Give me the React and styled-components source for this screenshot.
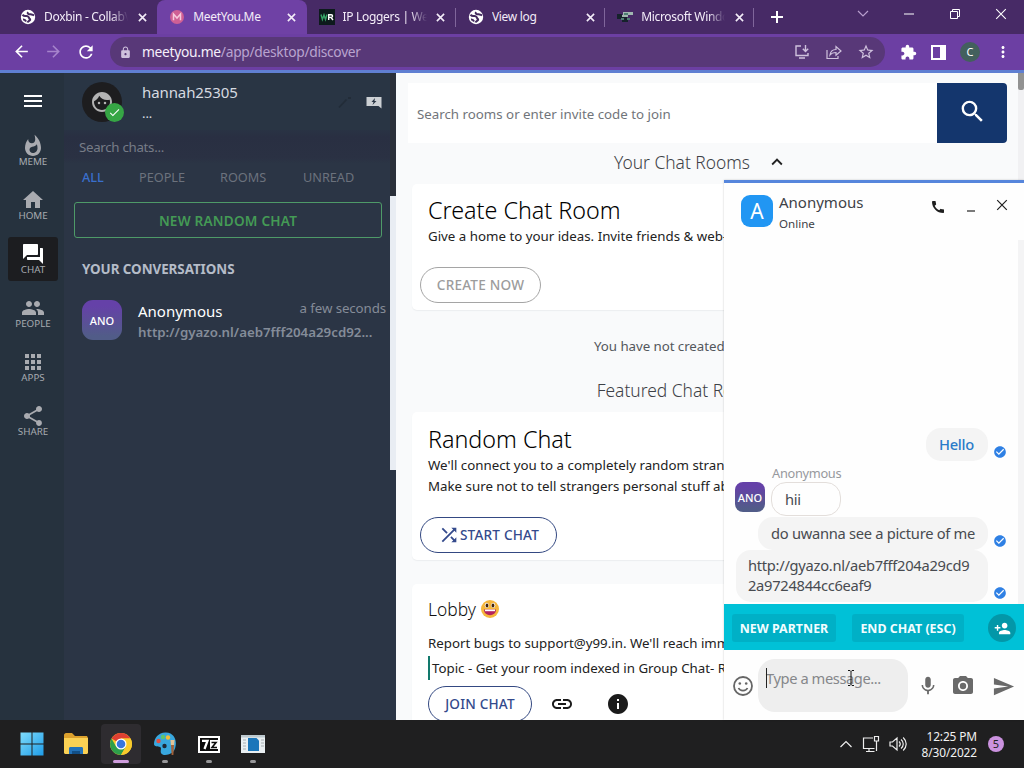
import React from "react";
import styled, { createGlobalStyle, css } from "styled-components";
import {
  MdApps,
  MdArrowBack,
  MdArrowForward,
  MdCall,
  MdCheck,
  MdCheckCircle,
  MdExtension,
  MdFace,
  MdForum,
  MdHome,
  MdInfo,
  MdKeyboardArrowUp,
  MdLink,
  MdLock,
  MdMic,
  MdMoreVert,
  MdPeople,
  MdPersonAdd,
  MdPhotoCamera,
  MdRefresh,
  MdSearch,
  MdSend,
  MdShare,
  MdShuffle,
  MdStarBorder,
  MdWhatshot,
} from "react-icons/md";

const GlobalStyle = createGlobalStyle`
  * {
    box-sizing: border-box;
  }

  body {
    margin: 0;
    overflow: hidden;
    font-family: "Noto Sans", "Open Sans", sans-serif;
  }

  svg {
    display: block;
    flex-shrink: 0;
  }
`;

const Screen = styled.div`
  width: 1024px;
  height: 768px;
  display: flex;
  flex-direction: column;
  overflow: hidden;
`;

/* ---------- browser ---------- */

const TabStrip = styled.header`
  display: flex;
  height: 34px;
  padding-left: 8px;
  background: #472a66;
`;

const BrowserTab = styled.div`
  position: relative;
  width: 149.3px;
  height: 34px;
  padding: 0 9px 0 12px;
  display: flex;
  align-items: center;
  color: #f3ecf8;
  ${(p) =>
    p.$active &&
    css`
      background: #6f41a5;
      border-radius: 8px 8px 0 0;
    `}
  ${(p) =>
    p.$divider &&
    css`
      &::after {
        content: "";
        position: absolute;
        right: 0;
        top: 8px;
        width: 1px;
        height: 19px;
        background: #80669b;
      }
    `}
`;

const TabTitle = styled.span`
  flex: 1;
  margin-left: 8px;
  font-size: 12px;
  line-height: 18px;
  letter-spacing: -0.32px;
  white-space: nowrap;
  overflow: hidden;
  mask-image: ${(p) => (p.$fade ? "linear-gradient(90deg, #000 80%, transparent)" : "none")};
`;

const TabClose = styled.span`
  width: 12px;
  margin-left: 8px;
  display: flex;
  justify-content: center;
`;

const PlusBox = styled.div`
  width: 45px;
  display: flex;
  align-items: center;
  justify-content: center;
`;

const WindowControls = styled.div`
  margin-left: auto;
  display: flex;
`;

const WindowButton = styled.div`
  width: 46px;
  height: 28px;
  display: flex;
  align-items: center;
  justify-content: center;
`;

const Toolbar = styled.div`
  height: 36px;
  padding: 0 12px;
  display: flex;
  align-items: center;
  background: #6c3fa3;
  color: #fff;
`;

const NavIcons = styled.div`
  display: flex;
  gap: 13px;
  margin-right: 14px;
`;

const AddressBar = styled.div`
  width: 775px;
  height: 30px;
  padding: 0 10px 0 9px;
  border-radius: 15px;
  background: #583878;
  display: flex;
  align-items: center;
  color: #cfc1dd;
`;

const Url = styled.span`
  flex: 1;
  margin-left: 10px;
  margin-top: -1px;
  color: #b9a4cf;
  font-size: 13.8px;
  letter-spacing: -0.29px;

  b {
    font-weight: 400;
    color: #f5effa;
  }
`;

const AddressIcons = styled.div`
  display: flex;
  align-items: center;
  gap: 14px;
`;

const ToolbarIcons = styled.div`
  margin-left: auto;
  display: flex;
  align-items: center;
  gap: 14px;
`;

const ProfileDot = styled.span`
  width: 20px;
  height: 20px;
  border-radius: 50%;
  background: #43605d;
  font-size: 11px;
  line-height: 20px;
  text-align: center;
`;

const LoadingLine = styled.div`
  height: 3px;
  flex-shrink: 0;
  background: #5f7fd2;
`;

/* ---------- app shell ---------- */

const Page = styled.div`
  position: relative;
  height: 647px;
  display: flex;
`;

const SideNav = styled.nav`
  width: 64px;
  padding: 20px 6px 0 8px;
  background: #26323e;
`;

const Burger = styled.div`
  width: 18px;
  height: 16px;
  margin: 0 0 20px 16px;
  padding: 2px 0;
  display: flex;
  flex-direction: column;
  justify-content: space-between;

  span {
    height: 2px;
    background: #fff;
  }
`;

const NavItem = styled.div`
  width: 50px;
  height: 44px;
  margin-bottom: 10px;
  padding-top: 5px;
  display: flex;
  flex-direction: column;
  align-items: center;
  border-radius: 3px;
  font-size: 9.8px;
  line-height: 10px;
  color: #a7abb0;
  background: ${(p) => (p.$active ? "#1c1d20" : "transparent")};

  svg {
    margin-bottom: -1px;
    color: ${(p) => (p.$active ? "#fff" : "#a9abb0")};
  }
`;

const ChatPanel = styled.section`
  width: 332px;
  background: #2b3545;
  display: flex;
  flex-direction: column;
`;

const ProfileRow = styled.div`
  height: 57px;
  padding: 9px 14px 0 18px;
  display: flex;
  background: #293544;
  border-right: 6px solid #2b303a;
`;

const ProfileAvatar = styled.div`
  position: relative;
  width: 40px;
  height: 40px;
  border-radius: 50%;
  background: #1d1d1f;
  display: flex;
  align-items: center;
  justify-content: center;
  color: #b3b3b3;
`;

const OnlineBadge = styled.span`
  position: absolute;
  left: 23px;
  top: 21px;
  width: 19px;
  height: 19px;
  border-radius: 50%;
  background: #36a645;
  color: #fff;
  display: flex;
  align-items: center;
  justify-content: center;
`;

const ProfileText = styled.div`
  flex: 1;
  margin: -1px 0 0 20px;
  color: #d6dae0;
  font-size: 15px;
  line-height: 22px;
  letter-spacing: -0.1px;
`;

const ProfileStatus = styled.div`
  font-size: 13px;
  line-height: 20px;
`;

const ProfileActions = styled.div`
  display: flex;
  gap: 13px;
  padding-top: 13px;
  margin-right: -6px;
`;

const ChatSearch = styled.div`
  height: 34px;
  padding-left: 15px;
  background: linear-gradient(180deg, #293344, #292f42 20%, #2a3143 80%, #2b3545);
  border-right: 6px solid #2b303a;
  color: #777c87;
  font-size: 13.3px;
  line-height: 34px;
  letter-spacing: -0.3px;
`;

const ChatFilters = styled.div`
  height: 32px;
  padding-left: 18px;
  display: grid;
  grid-template-columns: 57px 81px 83px auto;
  border-right: 6px solid #2b303a;
  color: #6c727d;
  font-size: 12.7px;
  line-height: 27px;
`;

const ChatFilter = styled.span`
  color: ${(p) => (p.$active ? "#3a6fcd" : "inherit")};
  font-weight: ${(p) => (p.$active ? 500 : 400)};
`;

const ChatList = styled.div`
  height: 274px;
  padding: 6px 4px 0 10px;
  border-right: 6px solid #e9edf3;
`;

const RandomChatButton = styled.div`
  width: 308px;
  height: 36px;
  border: 1px solid #4e9a68;
  border-radius: 3px;
  color: #449a55;
  font-size: 13.6px;
  font-weight: 600;
  line-height: 36px;
  letter-spacing: 0.2px;
  text-align: center;
`;

const ListHeading = styled.h4`
  margin: 20px 0 20px 8px;
  font-size: 13.4px;
  font-weight: 700;
  line-height: 22px;
  letter-spacing: -0.05px;
  color: #b5bcc8;
`;

const Conversation = styled.div`
  display: flex;
  margin-left: 8px;
`;

const SquareAvatar = styled.div`
  width: ${(p) => p.$size}px;
  height: ${(p) => p.$size}px;
  border-radius: ${(p) => p.$radius}px;
  flex-shrink: 0;
  background: linear-gradient(180deg, #6541a8 15%, #515c88 90%);
  color: #fff;
  font-size: 11px;
  font-weight: 500;
  text-align: center;
  line-height: ${(p) => p.$size + 1}px;
`;

const ConversationText = styled.div`
  flex: 1;
  margin-left: 16px;
`;

const ConversationTop = styled.div`
  display: flex;
  justify-content: space-between;
  color: #fff;
  font-size: 15px;
  line-height: 23px;

  time {
    font-size: 13.3px;
    line-height: 17px;
    letter-spacing: -0.1px;
    color: #858c98;
  }
`;

const ConversationPreview = styled.div`
  font-size: 13.3px;
  font-weight: 600;
  line-height: 18px;
  color: #848c99;
`;

/* ---------- discover ---------- */

const Discover = styled.main`
  width: 622px;
  padding: 10px 11px 0 12px;
  background: #f9fafb;
  overflow: hidden;
`;

const ScrollTrack = styled.div`
  width: 6px;
  background: #f1f1f3;

  &::before {
    content: "";
    display: block;
    height: 17px;
    border-radius: 0 0 2px 2px;
    background: #929292;
  }
`;

const RoomSearch = styled.div`
  display: flex;
  height: 60px;
  background: #fff;
  color: #71757a;
  font-size: 13.3px;
  line-height: 62px;
  padding-left: 9px;
`;

const SearchButton = styled.div`
  width: 70px;
  margin-left: auto;
  padding-bottom: 3px;
  display: flex;
  align-items: center;
  justify-content: center;
  background: #14366d;
  border-radius: 0 4px 4px 0;
  color: #fff;
`;

const SectionHeading = styled.h2`
  margin: ${(p) => p.$margin};
  display: flex;
  justify-content: center;
  align-items: center;
  gap: 16px;
  font-size: 17.4px;
  font-weight: 300;
  line-height: 24px;
  color: #3d4146;
`;

const EmptyNote = styled.p`
  margin: 23px 0 19px 186px;
  font-size: 13.3px;
  line-height: 26px;
  letter-spacing: -0.05px;
  color: #53575c;
`;

const Card = styled.article`
  margin: 0 0 ${(p) => p.$after || 0}px 4px;
  height: ${(p) => p.$height}px;
  padding: ${(p) => p.$top}px 0 0 16px;
  background: #fff;
  border-radius: 5px;
  box-shadow: 0 1px 1px #eceef0;
  white-space: nowrap;
`;

const CardTitle = styled.h3`
  margin: 0;
  font-size: 23.3px;
  font-weight: 300;
  line-height: 31px;
  color: #000;
`;

const CardText = styled.p`
  margin: 0;
  font-size: 13.3px;
  line-height: 21px;
  color: #222;
`;

const PillButton = styled.div`
  width: ${(p) => p.$width}px;
  height: 36px;
  margin: ${(p) => p.$margin};
  display: flex;
  align-items: center;
  justify-content: center;
  border: 1px solid ${(p) => (p.$muted ? "#a5a5a5" : "#344982")};
  border-radius: 18px;
  font-size: 13.6px;
  font-weight: 500;
  letter-spacing: 0.2px;
  line-height: 36px;
  color: ${(p) => (p.$muted ? "#9c9c9c" : "#344a8c")};
`;

const LobbyTitle = styled.h3`
  margin: 0 0 11px;
  display: flex;
  align-items: center;
  gap: 4px;
  font-size: 17.4px;
  font-weight: 300;
  line-height: 26px;
  color: #111;
`;

const Topic = styled.p`
  margin: 2px 0 6px;
  padding-left: 2px;
  border-left: 2px solid #12796c;
  font-size: 13.3px;
  line-height: 24px;
  color: #222;
`;

const LobbyActions = styled.div`
  display: flex;
  align-items: center;
  color: #1b1b1b;

  svg:nth-of-type(1) {
    margin-left: 18px;
  }

  svg:nth-of-type(2) {
    margin-left: 32px;
  }
`;

/* ---------- chat window ---------- */

const ChatWindow = styled.aside`
  position: absolute;
  left: 724px;
  top: 107px;
  width: 300px;
  height: 540px;
  display: flex;
  flex-direction: column;
  border-top: 3px solid #5686dc;
  background: #fefefe;
  box-shadow: 0 0 2px rgba(0, 0, 0, 0.2);
`;

const ChatHeader = styled.div`
  display: flex;
  height: 57px;
  padding: 12px 16px 0 17px;
  color: #1f1f1f;
`;

const LetterAvatar = styled.div`
  width: 32px;
  height: 32px;
  border-radius: 9px;
  background: #2196f3;
  color: #fff;
  font-size: 21px;
  line-height: 33px;
  text-align: center;
`;

const ChatName = styled.div`
  flex: 1;
  margin: -4px 0 0 6px;
  font-size: 15px;
  line-height: 22px;
  color: #3e4247;

  small {
    display: block;
    font-size: 11.6px;
    line-height: 21px;
  }
`;

const HeaderIcons = styled.div`
  display: flex;
  gap: 19px;
  padding-top: 4px;
`;

const Messages = styled.div`
  height: 364px;
  padding: 0 0 2px 11px;
  display: flex;
  flex-direction: column;
  justify-content: flex-end;
  border-right: 6px solid #f4f4f5;
`;

const OwnMessage = styled.div`
  display: flex;
  justify-content: flex-end;
  align-items: flex-end;
  padding-right: 11px;
  margin-bottom: ${(p) => p.$after || 0}px;

  svg {
    margin: 0 0 2px 5px;
    color: #2f80e4;
  }
`;

const Bubble = styled.div`
  width: ${(p) => p.$width}px;
  padding: ${(p) => p.$pad};
  border-radius: 15px;
  background: #f4f4f4;
  font-size: 14.7px;
  font-weight: ${(p) => (p.$accent ? 500 : 400)};
  line-height: 20px;
  letter-spacing: -0.28px;
  white-space: nowrap;
  color: ${(p) => (p.$accent ? "#2a7bc9" : "#484b50")};
`;

const TheirMessage = styled.div`
  display: flex;
  align-items: flex-end;
  gap: 6px;
  margin-bottom: 1px;

  ${SquareAvatar} {
    margin-bottom: 4px;
  }
`;

const SenderName = styled.div`
  font-size: 12.8px;
  line-height: 18px;
  letter-spacing: -0.3px;
  margin-left: 1px;
  color: #97999d;
`;

const TheirBubble = styled.div`
  width: 70px;
  height: 34px;
  padding-left: 13px;
  border: 1px solid #e3dedb;
  border-radius: 15px;
  font-size: 14.7px;
  line-height: 32px;
  letter-spacing: -0.28px;
  color: #484b50;
`;

const PartnerBar = styled.div`
  height: 46px;
  padding: 2px 8px 0;
  display: flex;
  align-items: center;
  background: #00c1d7;
`;

const PartnerButton = styled.div`
  width: ${(p) => p.$width}px;
  height: 28px;
  margin-right: 16px;
  background: #00b0c6;
  border-radius: 3px;
  color: #f2fdff;
  font-size: 12.4px;
  font-weight: 700;
  line-height: 29px;
  letter-spacing: 0.02px;
  text-align: center;
  white-space: nowrap;
`;

const AddPerson = styled.div`
  width: 28px;
  height: 28px;
  margin-left: auto;
  border-radius: 50%;
  background: #0397a8;
  color: #fff;
  display: flex;
  align-items: center;
  justify-content: center;
`;

const Composer = styled.div`
  height: 70px;
  padding: 9px 0 0 9px;
  display: flex;
  color: #6a6a6a;
`;

const IconSlot = styled.div`
  width: ${(p) => p.$width}px;
  height: 54px;
  flex-shrink: 0;
  display: flex;
  align-items: center;
  justify-content: center;
`;

const MessageField = styled.div`
  position: relative;
  width: 150px;
  height: 53px;
  flex-shrink: 0;
  margin-left: 5px;
  padding: 9px 8px;
  border-radius: 17px;
  background: #eeeeee;
  color: #85878a;
  font-size: 14.7px;
  line-height: 21px;
  letter-spacing: -0.42px;
  white-space: nowrap;

  &::before {
    content: "";
    position: absolute;
    left: 8px;
    top: 9px;
    width: 1px;
    height: 20px;
    background: #222;
  }
`;

const TextCursor = styled.svg`
  position: absolute;
  left: 89px;
  top: 11px;
`;

/* ---------- taskbar ---------- */

const Taskbar = styled.footer`
  height: 48px;
  padding: 4px 28px 4px 12px;
  display: flex;
  background: #1f1f20;
  color: #f2f2f2;
`;

const TaskIcon = styled.div`
  width: 40px;
  height: 40px;
  margin-right: 4.3px;
  padding-top: 6px;
  display: flex;
  flex-direction: column;
  align-items: center;
  border-radius: 4px;
  background: ${(p) => (p.$state === "active" ? "#2e2c30" : "transparent")};

  &::after {
    content: "";
    width: ${(p) => (p.$state === "active" ? 16 : 6)}px;
    height: 3px;
    margin-top: 2px;
    border-radius: 2px;
    background: ${(p) => ({ active: "#cf9ddd", open: "#98989a" })[p.$state] || "transparent"};
  }
`;

const Tray = styled.div`
  margin-left: auto;
  display: flex;
  align-items: center;
`;

const Clock = styled.div`
  width: 62px;
  margin: -1px 11px 0 8px;
  font-size: 11.9px;
  line-height: 16px;
  letter-spacing: -0.12px;
  text-align: right;
  white-space: nowrap;
`;

const NoticeCount = styled.span`
  width: 16px;
  height: 16px;
  margin-right: -8px;
  border-radius: 50%;
  background: #cb92df;
  color: #222;
  font-size: 11px;
  line-height: 16px;
  text-align: center;
`;

/* ---------- drawings ---------- */

const Cross = ({ size = 10, width = 1.8, color = "currentColor" }) => (
  <svg width={size} height={size} viewBox="0 0 10 10" stroke={color} strokeWidth={width} fill="none">
    <path d="M1 1l8 8M9 1l-8 8" />
  </svg>
);

const Globe = () => (
  <svg width="16" height="16" viewBox="0 0 16 16">
    <circle cx="8" cy="8" r="7.2" fill="#fff" />
    <path
      d="M2.500 5.800C5 8.500 6 6 8 7.500s.5 3.200 3 2.800M7.500 13.500c.5-1.500 2-1.200 3-3.200M8 3c-1 1.500.5 2.500 2 2.200 1.600-.3 2.500.6 4 1.200M3 10.500c1.500-.2 2.500.8 3 2"
      fill="none"
      stroke="#432a5e"
      strokeWidth="2"
    />
  </svg>
);

const MeetIcon = () => (
  <svg width="16" height="16" viewBox="0 0 16 16">
    <circle cx="8" cy="8" r="7" fill="#cf5f95" />
    <path d="M4.500 11.300V5L8 9l3.500-4v6.300" fill="none" stroke="#f7c9dc" strokeWidth="1.500" />
  </svg>
);

const LoggerIcon = () => (
  <svg width="16" height="16" viewBox="0 0 16 16">
    <rect width="16" height="16" fill="#0d1a1c" />
    <path d="M2 5.500l1.400 5 1.600-4.500 1.500 4.500L8 5.500" fill="none" stroke="#35a365" strokeWidth="1.400" />
    <path d="M9.700 11V5.700h2.500c1.800 0 1.800 2.700 0 2.700H10M12 8.500l2 2.500" fill="none" stroke="#fff" strokeWidth="1.400" />
  </svg>
);

const PixelIcon = () => (
  <svg width="16" height="16" viewBox="0 0 16 16">
    <path d="M6 3h10v3h-5v2H4V6h2z" fill="#9fb7b0" />
    <path d="M0 5h5v3h5v2H0zM5 10h6v3H5z" fill="#16222c" />
    <path d="M7 4h4v2H7zM10 9h3v2h-3zM4 9h3v2H4z" fill="#4d7f73" />
  </svg>
);

const InstallIcon = () => (
  <svg width="18" height="18" viewBox="0 0 18 18" fill="none" stroke="currentColor" strokeWidth="1.400">
    <path d="M8 3H3v9.500h12V10M6 15h6" />
    <path d="M12.500 2v6M9.800 5.700l2.700 2.700 2.700-2.700" />
  </svg>
);

const ForwardIcon = () => (
  <svg width="18" height="18" viewBox="0 0 18 18" fill="none" stroke="currentColor" strokeWidth="1.200">
    <path d="M2 7v8.500h11V13" />
    <path d="M5 12c.5-4 3-5.500 6-5.500V3.500L16 8l-5 4.300V9.500C8.500 9.500 6.500 10 5 12z" />
  </svg>
);

const PencilIcon = () => (
  <svg width="16" height="14" viewBox="0 0 16 14">
    <path d="M2 12.500l7.500-8M11 3h3" stroke="#222c38" strokeWidth="1.800" />
  </svg>
);

const QuickReplyIcon = () => (
  <svg width="16" height="14" viewBox="0 0 16 14">
    <path d="M.5 2h15v11.500l-3-2.500H.5z" fill="#ccd0d4" />
    <path d="M9 3L5.500 7h2L6.500 10l4-4h-2z" fill="#293544" />
  </svg>
);

const GrinEmoji = () => (
  <svg width="20" height="20" viewBox="0 0 20 20">
    <circle cx="10" cy="10" r="9" fill="#f6b63c" />
    <ellipse cx="6.800" cy="6.300" rx="2" ry="2.600" fill="#fff" />
    <ellipse cx="13.200" cy="6.300" rx="2" ry="2.600" fill="#fff" />
    <ellipse cx="7" cy="6.500" rx="1.400" ry="2.100" fill="#42240e" />
    <ellipse cx="13" cy="6.500" rx="1.400" ry="2.100" fill="#42240e" />
    <path d="M4 10.500h12c0 7.500-12 7.500-12 0z" fill="#b4235e" />
    <path d="M5 10.500h10v1.700H5z" fill="#fff" />
  </svg>
);

const SmileIcon = () => (
  <svg width="20" height="20" viewBox="0 0 20 20" fill="none" stroke="#666" strokeWidth="1.800">
    <circle cx="10" cy="10" r="9" />
    <circle cx="6.800" cy="7.500" r="1.300" fill="#666" stroke="none" />
    <circle cx="13.200" cy="7.500" r="1.300" fill="#666" stroke="none" />
    <path d="M5.500 12c1.500 3.500 7.500 3.500 9 0" strokeWidth="1.700" />
  </svg>
);

const WindowsLogo = () => (
  <svg width="24" height="28" viewBox="0 0 24 28">
    <defs>
      <linearGradient id="win" x1="0" y1="0" x2="1" y2="1">
        <stop offset="0" stopColor="#7fdcfb" />
        <stop offset="1" stopColor="#1e9ce8" />
      </linearGradient>
    </defs>
    <path d="M.5 2.500h11v11H.5zM12.500 2.500h11v11h-11zM.5 14.500h11v11H.5zM12.500 14.500h11v11h-11z" fill="url(#win)" />
  </svg>
);

const FolderLogo = () => (
  <svg width="26" height="28" viewBox="0 0 26 28">
    <path d="M1 5c0-1 1-2 2-2h6l3 3h12l1 2v15H1z" fill="#dca12d" />
    <path d="M1 8h24v14.500c0 1-1 1.500-2 1.500H3c-1 0-2-.5-2-1.500z" fill="#fad154" />
    <path d="M6 24v-5.500c0-1 .6-1.500 1.500-1.500h11c.9 0 1.500.5 1.500 1.500V24z" fill="#2272b9" />
    <path d="M9 24v-3h8v3z" fill="#124f86" />
  </svg>
);

const ChromeLogo = () => (
  <svg width="24" height="28" viewBox="0 0 24 28">
    <circle cx="12" cy="14" r="11" fill="#f9cb2c" />
    <path d="M12 14L2.500 8.500A11 11 0 0 1 21.500 8.500H12z" fill="#de4032" />
    <path d="M2.500 8.500A11 11 0 0 0 12 25l4.800-8.300L12 14l-4.800 2.700z" fill="#2d9f4b" />
    <path d="M12 8.500h9.500A11 11 0 0 1 12 25l4.800-8.300z" fill="#f9cb2c" />
    <circle cx="12" cy="14" r="5.500" fill="#fff" />
    <circle cx="12" cy="14" r="4.300" fill="#3676df" />
  </svg>
);

const PaintLogo = () => (
  <svg width="24" height="28" viewBox="0 0 24 28">
    <path d="M13 2.500C6 2 1 8 1 14c0 3 4 2 6 3s0 4 1 6c2 3.500 8 2 12-1 5-6 4-19-7-19.500z" fill="#38a7de" />
    <circle cx="10" cy="7" r="2.200" fill="#62c56c" />
    <circle cx="5.500" cy="11" r="2.200" fill="#e34f42" />
    <circle cx="15" cy="7.500" r="2.200" fill="#f4bd38" />
    <circle cx="11.500" cy="16" r="2.200" fill="#1f2938" />
    <path d="M17.500 10h4l-.5 6h-3z" fill="#e3c396" />
    <path d="M18 15h3l-.6 10h-1.800z" fill="#a3623a" />
  </svg>
);

const ZipLogo = () => (
  <svg width="24" height="28" viewBox="0 0 24 28">
    <rect x="1" y="6" width="22" height="17" fill="#fff" />
    <rect x="3" y="8" width="18" height="13" fill="#0b0b0b" />
    <rect x="13" y="10" width="8" height="9" fill="#fff" />
    <path d="M5 10.800h5.500L7.500 19" fill="none" stroke="#fff" strokeWidth="2.300" />
    <path d="M14.500 12.500h4.500L15 17.500h5" fill="none" stroke="#0b0b0b" strokeWidth="1.600" />
  </svg>
);

const DocumentLogo = () => (
  <svg width="26" height="28" viewBox="0 0 26 28">
    <rect x="1" y="5" width="24" height="18" fill="#e9eff2" />
    <path d="M1 5h24v2.500H1z" fill="#bcc8ce" />
    <path d="M8 8h8.500L19 10.500V21H8z" fill="#1b76ba" />
    <path d="M3 10h3M3 13h3M3 16h3M3 19h3M21 10h3M21 13h3M21 16h3" stroke="#a7aeb2" />
  </svg>
);

const tabs = [
  { title: "Doxbin - CollabVM", icon: <Globe />, fade: true },
  { title: "MeetYou.Me", icon: <MeetIcon />, active: true },
  { title: "IP Loggers | Web", icon: <LoggerIcon />, divider: true, fade: true },
  { title: "View log", icon: <Globe />, divider: true },
  { title: "Microsoft Windo", icon: <PixelIcon />, divider: true, fade: true },
];

const navItems = [
  { label: "MEME", Icon: MdWhatshot },
  { label: "HOME", Icon: MdHome },
  { label: "CHAT", Icon: MdForum, active: true },
  { label: "PEOPLE", Icon: MdPeople },
  { label: "APPS", Icon: MdApps },
  { label: "SHARE", Icon: MdShare },
];

const taskIcons = [
  { Icon: WindowsLogo },
  { Icon: FolderLogo },
  { Icon: ChromeLogo, state: "active" },
  { Icon: PaintLogo, state: "open" },
  { Icon: ZipLogo, state: "open" },
  { Icon: DocumentLogo, state: "open" },
];

const Browser = () => (
  <>
    <TabStrip>
      {tabs.map((tab) => (
        <BrowserTab key={tab.title} $active={tab.active} $divider={tab.divider}>
          {tab.icon}
          <TabTitle $fade={tab.fade}>{tab.title}</TabTitle>
          <TabClose>
            <Cross size={9} />
          </TabClose>
        </BrowserTab>
      ))}
      <PlusBox>
        <svg width="12" height="12" viewBox="0 0 12 12" stroke="#fff" strokeWidth="2">
          <path d="M6 0v12M0 6h12" />
        </svg>
      </PlusBox>
      <WindowControls>
        <WindowButton>
          <svg width="12" height="8" viewBox="0 0 12 8" stroke="#b99fce" strokeWidth="1.200" fill="none">
            <path d="M1 1l5 5 5-5" />
          </svg>
        </WindowButton>
        <WindowButton>
          <svg width="10" height="2" viewBox="0 0 10 2">
            <path d="M0 1h10" stroke="#fff" />
          </svg>
        </WindowButton>
        <WindowButton>
          <svg width="10" height="10" viewBox="0 0 10 10" fill="none" stroke="#fff">
            <path d="M.5 2.500h7v7h-7zM2.500 2.500v-2h7v7h-2" />
          </svg>
        </WindowButton>
        <WindowButton>
          <Cross size={12} width={0.9} color="#fff" />
        </WindowButton>
      </WindowControls>
    </TabStrip>
    <Toolbar>
      <NavIcons>
        <MdArrowBack size={19} />
        <MdArrowForward size={19} color="#a684cc" />
        <MdRefresh size={20} />
      </NavIcons>
      <AddressBar>
        <MdLock size={13} />
        <Url>
          <b>meetyou.me</b>/app/desktop/discover
        </Url>
        <AddressIcons>
          <InstallIcon />
          <ForwardIcon />
          <MdStarBorder size={18} />
        </AddressIcons>
      </AddressBar>
      <ToolbarIcons>
        <MdExtension size={17} />
        <svg width="15" height="15" viewBox="0 0 15 15">
          <path d="M1 1h13v13H1z" fill="none" stroke="#fff" strokeWidth="2" />
          <path d="M9 1h5v13H9z" fill="#fff" />
        </svg>
        <ProfileDot>C</ProfileDot>
        <MdMoreVert size={18} />
      </ToolbarIcons>
    </Toolbar>
    <LoadingLine />
  </>
);

const Sidebar = () => (
  <>
    <SideNav>
      <Burger>
        <span />
        <span />
        <span />
      </Burger>
      {navItems.map(({ label, Icon, active }) => (
        <NavItem key={label} $active={active}>
          <Icon size={24} />
          {label}
        </NavItem>
      ))}
    </SideNav>
    <ChatPanel>
      <ProfileRow>
        <ProfileAvatar>
          <MdFace size={24} />
          <OnlineBadge>
            <MdCheck size={13} />
          </OnlineBadge>
        </ProfileAvatar>
        <ProfileText>
          hannah25305
          <ProfileStatus>...</ProfileStatus>
        </ProfileText>
        <ProfileActions>
          <PencilIcon />
          <QuickReplyIcon />
        </ProfileActions>
      </ProfileRow>
      <ChatSearch>Search chats...</ChatSearch>
      <ChatFilters>
        <ChatFilter $active>ALL</ChatFilter>
        <ChatFilter>PEOPLE</ChatFilter>
        <ChatFilter>ROOMS</ChatFilter>
        <ChatFilter>UNREAD</ChatFilter>
      </ChatFilters>
      <ChatList>
        <RandomChatButton>NEW RANDOM CHAT</RandomChatButton>
        <ListHeading>YOUR CONVERSATIONS</ListHeading>
        <Conversation>
          <SquareAvatar $size={40} $radius={11}>
            ANO
          </SquareAvatar>
          <ConversationText>
            <ConversationTop>
              Anonymous <time>a few seconds</time>
            </ConversationTop>
            <ConversationPreview>http://gyazo.nl/aeb7fff204a29cd92...</ConversationPreview>
          </ConversationText>
        </Conversation>
      </ChatList>
    </ChatPanel>
  </>
);

const DiscoverPage = () => (
  <Discover>
    <RoomSearch>
      Search rooms or enter invite code to join
      <SearchButton>
        <MdSearch size={29} />
      </SearchButton>
    </RoomSearch>
    <SectionHeading $margin="7px 0 10px -13px">
      Your Chat Rooms <MdKeyboardArrowUp size={22} color="#222" />
    </SectionHeading>
    <Card $height={126} $top={11}>
      <CardTitle>Create Chat Room</CardTitle>
      <CardText>Give a home to your ideas. Invite friends &amp; web-cam</CardText>
      <PillButton $width={121} $margin="20px 0 0 -8px" $muted>
        CREATE NOW
      </PillButton>
    </Card>
    <EmptyNote>You have not created any chat rooms</EmptyNote>
    <SectionHeading $margin="0 0 10px -51px">Featured Chat Rooms</SectionHeading>
    <Card $height={148} $top={12} $after={24}>
      <CardTitle>Random Chat</CardTitle>
      <CardText>
        We'll connect you to a completely random stranger.
        <br />
        Make sure not to tell strangers personal stuff about you.
      </CardText>
      <PillButton $width={137} $margin="20px 0 0 -8px">
        <MdShuffle size={22} /> START CHAT
      </PillButton>
    </Card>
    <Card $height={180} $top={12}>
      <LobbyTitle>
        Lobby <GrinEmoji />
      </LobbyTitle>
      <CardText>Report bugs to support@y99.in. We'll reach immediately</CardText>
      <Topic>Topic - Get your room indexed in Group Chat- Rooms</Topic>
      <LobbyActions>
        <PillButton $width={104} $margin="0">
          JOIN CHAT
        </PillButton>
        <MdLink size={24} />
        <MdInfo size={24} />
      </LobbyActions>
    </Card>
  </Discover>
);

const ConversationBox = () => (
  <ChatWindow>
    <ChatHeader>
      <LetterAvatar>A</LetterAvatar>
      <ChatName>
        Anonymous
        <small>Online</small>
      </ChatName>
      <HeaderIcons>
        <MdCall size={16} />
        <svg width="12" height="13" viewBox="0 0 12 13">
          <path d="M2 12h8" stroke="#222" strokeWidth="1.200" />
        </svg>
        <Cross size={12} width={1} />
      </HeaderIcons>
    </ChatHeader>
    <Messages>
      <OwnMessage $after={3}>
        <Bubble $width={62} $pad="6px 13px 7px" $accent>
          Hello
        </Bubble>
        <MdCheckCircle size={14} />
      </OwnMessage>
      <TheirMessage>
        <SquareAvatar $size={30} $radius={8}>
          ANO
        </SquareAvatar>
        <div>
          <SenderName>Anonymous</SenderName>
          <TheirBubble>hii</TheirBubble>
        </div>
      </TheirMessage>
      <OwnMessage>
        <Bubble $width={230} $pad="6px 13px 7px">
          do uwanna see a picture of me
        </Bubble>
        <MdCheckCircle size={14} />
      </OwnMessage>
      <OwnMessage>
        <Bubble $width={252} $pad="5px 12px 7px">
          http://gyazo.nl/aeb7fff204a29cd9
          <br />
          2a9724844cc6eaf9
        </Bubble>
        <MdCheckCircle size={14} />
      </OwnMessage>
    </Messages>
    <PartnerBar>
      <PartnerButton $width={104}>NEW PARTNER</PartnerButton>
      <PartnerButton $width={112}>END CHAT (ESC)</PartnerButton>
      <AddPerson>
        <MdPersonAdd size={17} />
      </AddPerson>
    </PartnerBar>
    <Composer>
      <IconSlot $width={20}>
        <SmileIcon />
      </IconSlot>
      <MessageField>
        Type a message...
        <TextCursor width="8" height="16" viewBox="0 0 8 16" fill="none" stroke="#111">
          <path d="M1 .5h2l1 1 1-1h2M4 1.500v13M1 15.500h2l1-1 1 1h2" />
        </TextCursor>
      </MessageField>
      <IconSlot $width={39}>
        <MdMic size={22} />
      </IconSlot>
      <IconSlot $width={32}>
        <MdPhotoCamera size={24} />
      </IconSlot>
      <IconSlot $width={48}>
        <MdSend size={23} />
      </IconSlot>
    </Composer>
  </ChatWindow>
);

const SystemBar = () => (
  <Taskbar>
    {taskIcons.map(({ Icon, state }, i) => (
      <TaskIcon key={i} $state={state}>
        <Icon />
      </TaskIcon>
    ))}
    <Tray>
      <svg width="12" height="8" viewBox="0 0 12 8" fill="none" stroke="#eee" strokeWidth="1.200">
        <path d="M.5 7L6 1.500 11.500 7" />
      </svg>
      <IconSlot $width={37}>
        <svg width="18" height="18" viewBox="0 0 18 18" fill="none" stroke="#eee" strokeWidth="1.200">
          <path d="M11 3H1.500v10.500h11M7 13.500v3M4 16.500h8.500M12.500 1.500h4v4.500h-4zM14.500 6v10" />
        </svg>
      </IconSlot>
      <svg width="18" height="16" viewBox="0 0 18 16" fill="none" stroke="#eee" strokeWidth="1.200">
        <path d="M1 6h2.500L8 2v12L3.500 10H1zM10 5.500c1.500 1.500 1.500 3.500 0 5M12 3.500c3 2.500 3 6.500 0 9M14.200 1.500c4 4 4 9 0 13" />
      </svg>
      <Clock>
        12:25 PM
        <br />
        8/30/2022
      </Clock>
      <NoticeCount>5</NoticeCount>
    </Tray>
  </Taskbar>
);

const App = () => {
  return (
    <Screen>
      <GlobalStyle />
      <Browser />
      <Page>
        <Sidebar />
        <DiscoverPage />
        <ScrollTrack />
        <ConversationBox />
      </Page>
      <SystemBar />
    </Screen>
  );
};

export default App;
